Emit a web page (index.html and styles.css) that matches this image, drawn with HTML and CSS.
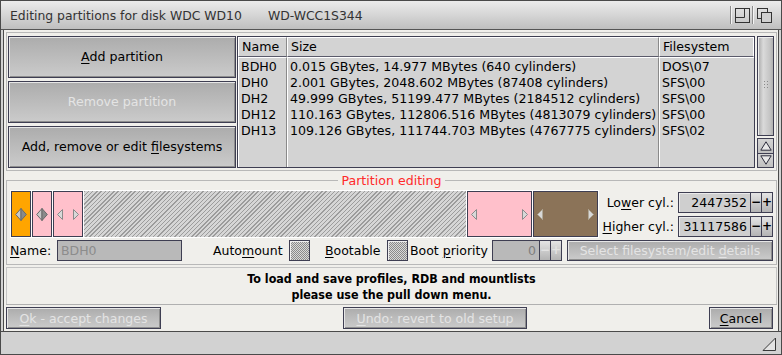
FILE: index.html
```html
<!DOCTYPE html>
<html>
<head>
<meta charset="utf-8">
<link rel="stylesheet" href="styles.css">
</head>
<body>
<div class="window">
  <div class="titlebar">
    <span class="title">Editing partitions for disk WDC WD10</span>
    <span class="title title-id">WD-WCC1S344</span>
    <div class="tgadgets">
      <span class="tsep"></span>
      <svg class="tgad" width="15" height="15" viewBox="0 0 15 15"><rect x="0.5" y="0.5" width="14" height="14" fill="none" stroke="#333"/><path d="M0.5 9.5 H9.5 V0.5" fill="none" stroke="#333"/></svg>
      <span class="tsep"></span>
      <svg class="tgad" width="16" height="15" viewBox="0 0 16 15"><rect x="0.5" y="0.5" width="10" height="10" fill="none" stroke="#333"/><rect x="4.5" y="4.5" width="10" height="10" fill="#d0d0d0" stroke="#333"/></svg>
    </div>
  </div>
  <div class="client">
    <div class="panel top">
      <div class="leftbtns">
        <div class="btn"><span><u>A</u>dd partition</span></div>
        <div class="btn disabled"><span>Remove partition</span></div>
        <div class="btn"><span>Add, remove or edit <u>f</u>ilesystems</span></div>
      </div>
      <div class="list">
        <div class="th">Name</div>
        <div class="th">Size</div>
        <div class="th th-last">Filesystem</div>
        <div class="tcol">
          <div>BDH0</div><div>DH0</div><div>DH2</div><div>DH12</div><div>DH13</div>
        </div>
        <div class="tcol">
          <div>0.015 GBytes, 14.977 MBytes (640 cylinders)</div>
          <div>2.001 GBytes, 2048.602 MBytes (87408 cylinders)</div>
          <div>49.999 GBytes, 51199.477 MBytes (2184512 cylinders)</div>
          <div>110.163 GBytes, 112806.516 MBytes (4813079 cylinders)</div>
          <div>109.126 GBytes, 111744.703 MBytes (4767775 cylinders)</div>
        </div>
        <div class="tcol tcol-last">
          <div>DOS\07</div><div>SFS\00</div><div>SFS\00</div><div>SFS\00</div><div>SFS\02</div>
        </div>
      </div>
      <div class="scroll">
        <div class="thumb"><span class="grip"></span></div>
        <div class="arrows">
          <div class="arrow"><svg width="12" height="10" viewBox="0 0 12 10"><path d="M6 0.8 L11.2 9.2 H0.8 Z" fill="#e8e8e8" stroke="#2c2c3c"/></svg></div>
          <div class="arrow"><svg width="12" height="10" viewBox="0 0 12 10"><path d="M6 9.2 L11.2 0.8 H0.8 Z" fill="#e8e8e8" stroke="#2c2c3c"/></svg></div>
        </div>
      </div>
    </div>

    <fieldset class="group">
      <legend>Partition editing</legend>
      <div class="barrow">
        <div class="bar">
          <div class="seg seg-orange seg-narrow">
            <svg width="12" height="13" viewBox="0 0 12 13"><path d="M6 0.5 L0.7 6.5 L6 12.5 Z" fill="#c9c9c9" stroke="#6a6a6a"/><path d="M6 0.5 L11.3 6.5 L6 12.5 Z" fill="#8a8a8a" stroke="#6a6a6a"/></svg>
          </div>
          <div class="seg seg-pink seg-narrow">
            <svg width="12" height="13" viewBox="0 0 12 13"><path d="M6 0.5 L0.7 6.5 L6 12.5 Z" fill="#c9c9c9" stroke="#6a6a6a"/><path d="M6 0.5 L11.3 6.5 L6 12.5 Z" fill="#8a8a8a" stroke="#6a6a6a"/></svg>
          </div>
          <div class="seg seg-pink seg-mid">
            <svg width="6" height="11" viewBox="0 0 6 11"><path d="M5.5 0.5 L0.5 5.5 L5.5 10.5 Z" fill="#d8d8d8" stroke="#8a8a8a"/></svg>
            <svg width="6" height="11" viewBox="0 0 6 11"><path d="M0.5 0.5 L5.5 5.5 L0.5 10.5 Z" fill="#d8d8d8" stroke="#8a8a8a"/></svg>
          </div>
          <div class="seg-free"></div>
          <div class="seg seg-pink seg-wide">
            <svg width="6" height="11" viewBox="0 0 6 11"><path d="M5.5 0.5 L0.5 5.5 L5.5 10.5 Z" fill="#d8d8d8" stroke="#8a8a8a"/></svg>
            <svg width="6" height="11" viewBox="0 0 6 11"><path d="M0.5 0.5 L5.5 5.5 L0.5 10.5 Z" fill="#d8d8d8" stroke="#8a8a8a"/></svg>
          </div>
          <div class="seg seg-brown seg-wide">
            <svg width="6" height="11" viewBox="0 0 6 11"><path d="M5.5 0.5 L0.5 5.5 L5.5 10.5 Z" fill="#d8d8d8" stroke="#b0a898"/></svg>
            <svg width="6" height="11" viewBox="0 0 6 11"><path d="M0.5 0.5 L5.5 5.5 L0.5 10.5 Z" fill="#d8d8d8" stroke="#b0a898"/></svg>
          </div>
        </div>
        <div class="cyl">
          <span class="cyl-label">Lo<u>w</u>er cyl.:</span>
          <span class="num">2447352</span>
          <span class="pm">−</span>
          <span class="pm">+</span>
          <span class="cyl-label"><u>H</u>igher cyl.:</span>
          <span class="num">31117586</span>
          <span class="pm">−</span>
          <span class="pm">+</span>
        </div>
      </div>
      <div class="opts">
        <span class="lbl lbl-name"><u>N</u>ame:</span>
        <span class="field field-name">BDH0</span>
        <span class="lbl lbl-auto">Auto<u>m</u>ount</span>
        <span class="check"></span>
        <span class="lbl lbl-boot"><u>B</u>ootable</span>
        <span class="check"></span>
        <span class="lbl lbl-prio">Boot <u>p</u>riority</span>
        <span class="field field-prio">0</span>
        <span class="pm pm-dis">−</span>
        <span class="pm pm-dis">+</span>
        <div class="btn btn-select disabled"><span>Select filesystem/edit <u>d</u>etails</span></div>
      </div>
    </fieldset>

    <div class="bottom">
      <div class="info">
        <div>To load and save profiles, RDB and mountlists</div>
        <div>please use the pull down menu.</div>
      </div>
      <div class="actions">
        <div class="btn btn-ok disabled"><span><u>O</u>k - accept changes</span></div>
        <div class="btn btn-undo disabled"><span><u>U</u>ndo: revert to old setup</span></div>
        <div class="btn btn-cancel"><span><u>C</u>ancel</span></div>
      </div>
    </div>
  </div>
  <div class="status">
    <svg class="sizer" width="15" height="15" viewBox="0 0 15 15"><path d="M1 13.5 L13.5 1 V13.5 Z" fill="#e4e4e4" stroke="#3a3a3a"/></svg>
  </div>
</div>
</body>
</html>
```

FILE: styles.css
```css
* { box-sizing: border-box; }
html, body { margin: 0; padding: 0; }
body {
  width: 782px;
  height: 355px;
  overflow: hidden;
  font-family: "DejaVu Sans", "Bitstream Vera Sans", sans-serif;
  font-size: 12.5px;
  color: #000;
  background: #f0efeb;
}
u { text-decoration-thickness: 1px; text-underline-offset: 2px; }

.window {
  width: 782px;
  height: 355px;
  border: 1px solid #4a4a4a;
  background: #d2d2d2;
  display: flex;
  flex-direction: column;
}

/* title bar */
.titlebar {
  height: 29px;
  flex: none;
  display: flex;
  align-items: center;
  padding-left: 9px;
  background: linear-gradient(#ececec, #bfbfbf);
  border-bottom: 1px solid #555;
}
.title { color: #333; font-size: 12.4px; }
.title-id { margin-left: 26px; }
.tgadgets {
  margin-left: auto;
  display: flex;
  align-items: center;
  height: 100%;
  padding-right: 8px;
}
.tsep {
  width: 2px;
  height: 18px;
  border-left: 1px solid #8c8c8c;
  border-right: 1px solid #f4f4f4;
  margin: 0 3px 0 2px;
}
.tgad { display: block; }

/* client area */
.client {
  flex: 1;
  margin: 0 2px;
  border-left: 1px solid #4a4a4a;
  border-right: 1px solid #4a4a4a;
  background: #f0efeb;
  display: flex;
  flex-direction: column;
}

.panel {
  margin: 2px 1px 0 2px;
  border: 1px solid #b8b8b8;
}
.top {
  height: 139px;
  padding: 3px 1px 2px 1px;
  display: flex;
  gap: 1px;
}

/* buttons */
.btn {
  display: flex;
  align-items: center;
  justify-content: center;
  border: 1px solid #3e3e52;
  background: linear-gradient(#acacac, #cbcbcb);
  box-shadow: inset 1px 1px 0 #e6e6e6, inset -1px -1px 0 #8e8e8e;
  white-space: nowrap;
}
.btn.disabled { color: #e4e4e4; }
.leftbtns {
  width: 228px;
  flex: none;
  display: flex;
  flex-direction: column;
  gap: 3px;
}
.leftbtns .btn { flex: 1; font-size: 12.6px; padding-bottom: 2px; }

/* list */
.list {
  flex: 1;
  border: 1px solid #3e3e52;
  background: #d3d3d3;
  display: grid;
  grid-template-columns: 49px 372px 1fr;
  grid-template-rows: 20px 1fr;
  font-size: 12.6px;
}
.th {
  border-top: 1px solid #fff;
  border-left: 1px solid #fff;
  border-right: 1px solid #8a8a8a;
  border-bottom: 1px solid #5a5a6a;
  padding-left: 3px;
  line-height: 18px;
}
.th-last { border-right: 1px solid #fff; }
.tcol {
  border-top: 1px solid #fff;
  border-left: 1px solid #fff;
  border-right: 1px solid #8a8a8a;
  padding: 1px 0 0 2px;
  line-height: 16px;
  white-space: nowrap;
}
.tcol-last { border-right: none; }

/* scrollbar */
.scroll {
  width: 19px;
  flex: none;
  display: flex;
  flex-direction: column;
  gap: 2px;
  padding: 0 1px 0 1px;
}
.thumb {
  flex: 1;
  border: 1px solid #3e3e52;
  background: linear-gradient(90deg, #a8a8a8, #dadada 35%, #c4c4c4 80%, #b0b0b0);
  box-shadow: inset 1px 1px 0 #eee;
  display: flex;
  align-items: center;
  justify-content: center;
}
.grip {
  width: 5px;
  height: 9px;
  margin-bottom: 4px;
  background: radial-gradient(circle, #8a8a8a 0 0.7px, transparent 0.8px) 0 0 / 3px 3px;
}
.arrows {
  height: 30px;
  display: flex;
  flex-direction: column;
  border: 1px solid #3e3e52;
}
.arrow {
  flex: 1;
  display: flex;
  align-items: center;
  justify-content: center;
  background: linear-gradient(#d4d4d4, #c0c0c0);
}
.arrow + .arrow { border-top: 1px solid #3e3e52; }
.arrow svg { display: block; }

/* group */
.group {
  margin: 2px 1px 0 2px;
  border: 1px solid #b8b8b8;
  padding: 2px 3px 3px 3px;
  min-width: 0;
}
.group legend {
  margin: 0 auto;
  padding: 0 3px;
  color: #ff2a2a;
  line-height: 15px;
  font-size: 12.6px;
}
.barrow {
  display: flex;
  gap: 2px;
  height: 48px;
}
.bar {
  width: 589px;
  flex: none;
  background: #fff;
  padding: 1px;
  display: flex;
  gap: 1px;
}
.seg {
  border: 1px solid #3e3e52;
  display: flex;
  align-items: center;
}
.seg svg { display: block; }
.seg-narrow { width: 20px; justify-content: center; }
.seg-mid { width: 30px; justify-content: space-between; padding: 0 3px; }
.seg-wide { width: 65px; justify-content: space-between; padding: 0 3px; }
.seg-orange { background: #ffa500; }
.seg-pink { background: #ffc0cb; }
.seg-brown { background: #8b7358; }
.seg-free {
  flex: 1;
  background: repeating-linear-gradient(135deg, #9c9c9c 0 1px, #d6d6d6 1px 3px);
}

.cyl {
  flex: 1;
  display: grid;
  grid-template-columns: 1fr 73px 11px 11px;
  grid-auto-rows: 21px;
  row-gap: 3px;
  align-items: stretch;
  margin-top: 2px;
}
.cyl-label {
  text-align: right;
  padding-right: 4px;
  line-height: 21px;
}
.num {
  border: 1px solid #3e3e52;
  background: #cfcfcf;
  box-shadow: inset 1px 1px 0 #eaeaea;
  text-align: right;
  padding-right: 3px;
  line-height: 19px;
}
.pm {
  border: 1px solid #3e3e52;
  border-left: none;
  background: linear-gradient(#e4e4e4, #b4b4b4);
  font-weight: bold;
  font-size: 12px;
  text-align: center;
  line-height: 18px;
}

.opts {
  display: flex;
  align-items: center;
  height: 21px;
  margin-top: 2px;
}
.lbl { line-height: 21px; white-space: nowrap; }
.lbl-name { width: 47px; }
.lbl-auto { width: 75px; margin-left: 31px; }
.lbl-boot { width: 61px; margin-left: 15px; }
.lbl-prio { width: 81px; margin-left: 2px; }
.field {
  height: 21px;
  border: 1px solid #3e3e52;
  background: #b9b9b9;
  color: #8c8c8c;
  line-height: 19px;
}
.field-name { width: 125px; padding-left: 3px; }
.field-prio { width: 48px; margin-left: 1px; text-align: right; padding-right: 3px; color: #7e7e7e; }
.opts .pm { height: 21px; width: 11px; }
.opts .pm:first-of-type { border-left: 1px solid #3e3e52; }
.pm-dis { color: #e2e2e2; }
.check {
  width: 21px;
  height: 21px;
  margin-left: 1px;
  border: 1px solid #3e3e52;
  background: repeating-conic-gradient(#8a8a8a 0 25%, #d8d8d8 0 50%) 0 0 / 2px 2px;
  box-shadow: inset 1px 1px 0 #eee;
}
.btn-select { width: 206px; height: 21px; margin-left: 5px; }

/* bottom */
.bottom {
  flex: 1;
  margin: 2px 1px 0 2px;
  display: flex;
  flex-direction: column;
}
.info {
  flex: 1;
  border: 1px solid #c4c4c4;
  border-bottom: none;
  display: flex;
  flex-direction: column;
  justify-content: center;
  align-items: center;
  font-family: "DejaVu Sans Condensed", "DejaVu Sans", sans-serif;
  font-stretch: condensed;
  font-weight: bold;
  font-size: 12.4px;
  line-height: 16px;
  padding-top: 1px;
}
.actions {
  height: 27px;
  flex: none;
  border-top: 1px solid #b0b0b0;
  display: flex;
  justify-content: space-between;
  padding: 2px 4px 2px 0;
}
.actions .btn { height: 22px; }
.btn-ok { width: 155px; }
.btn-undo { width: 184px; }
.btn-cancel { width: 64px; }

/* status */
.status {
  height: 23px;
  flex: none;
  border-top: 1px solid #4a4a4a;
  background: #d2d2d2;
  display: flex;
  align-items: center;
  justify-content: flex-end;
  padding-right: 4px;
}
.sizer { display: block; margin-top: 2px; }
```
